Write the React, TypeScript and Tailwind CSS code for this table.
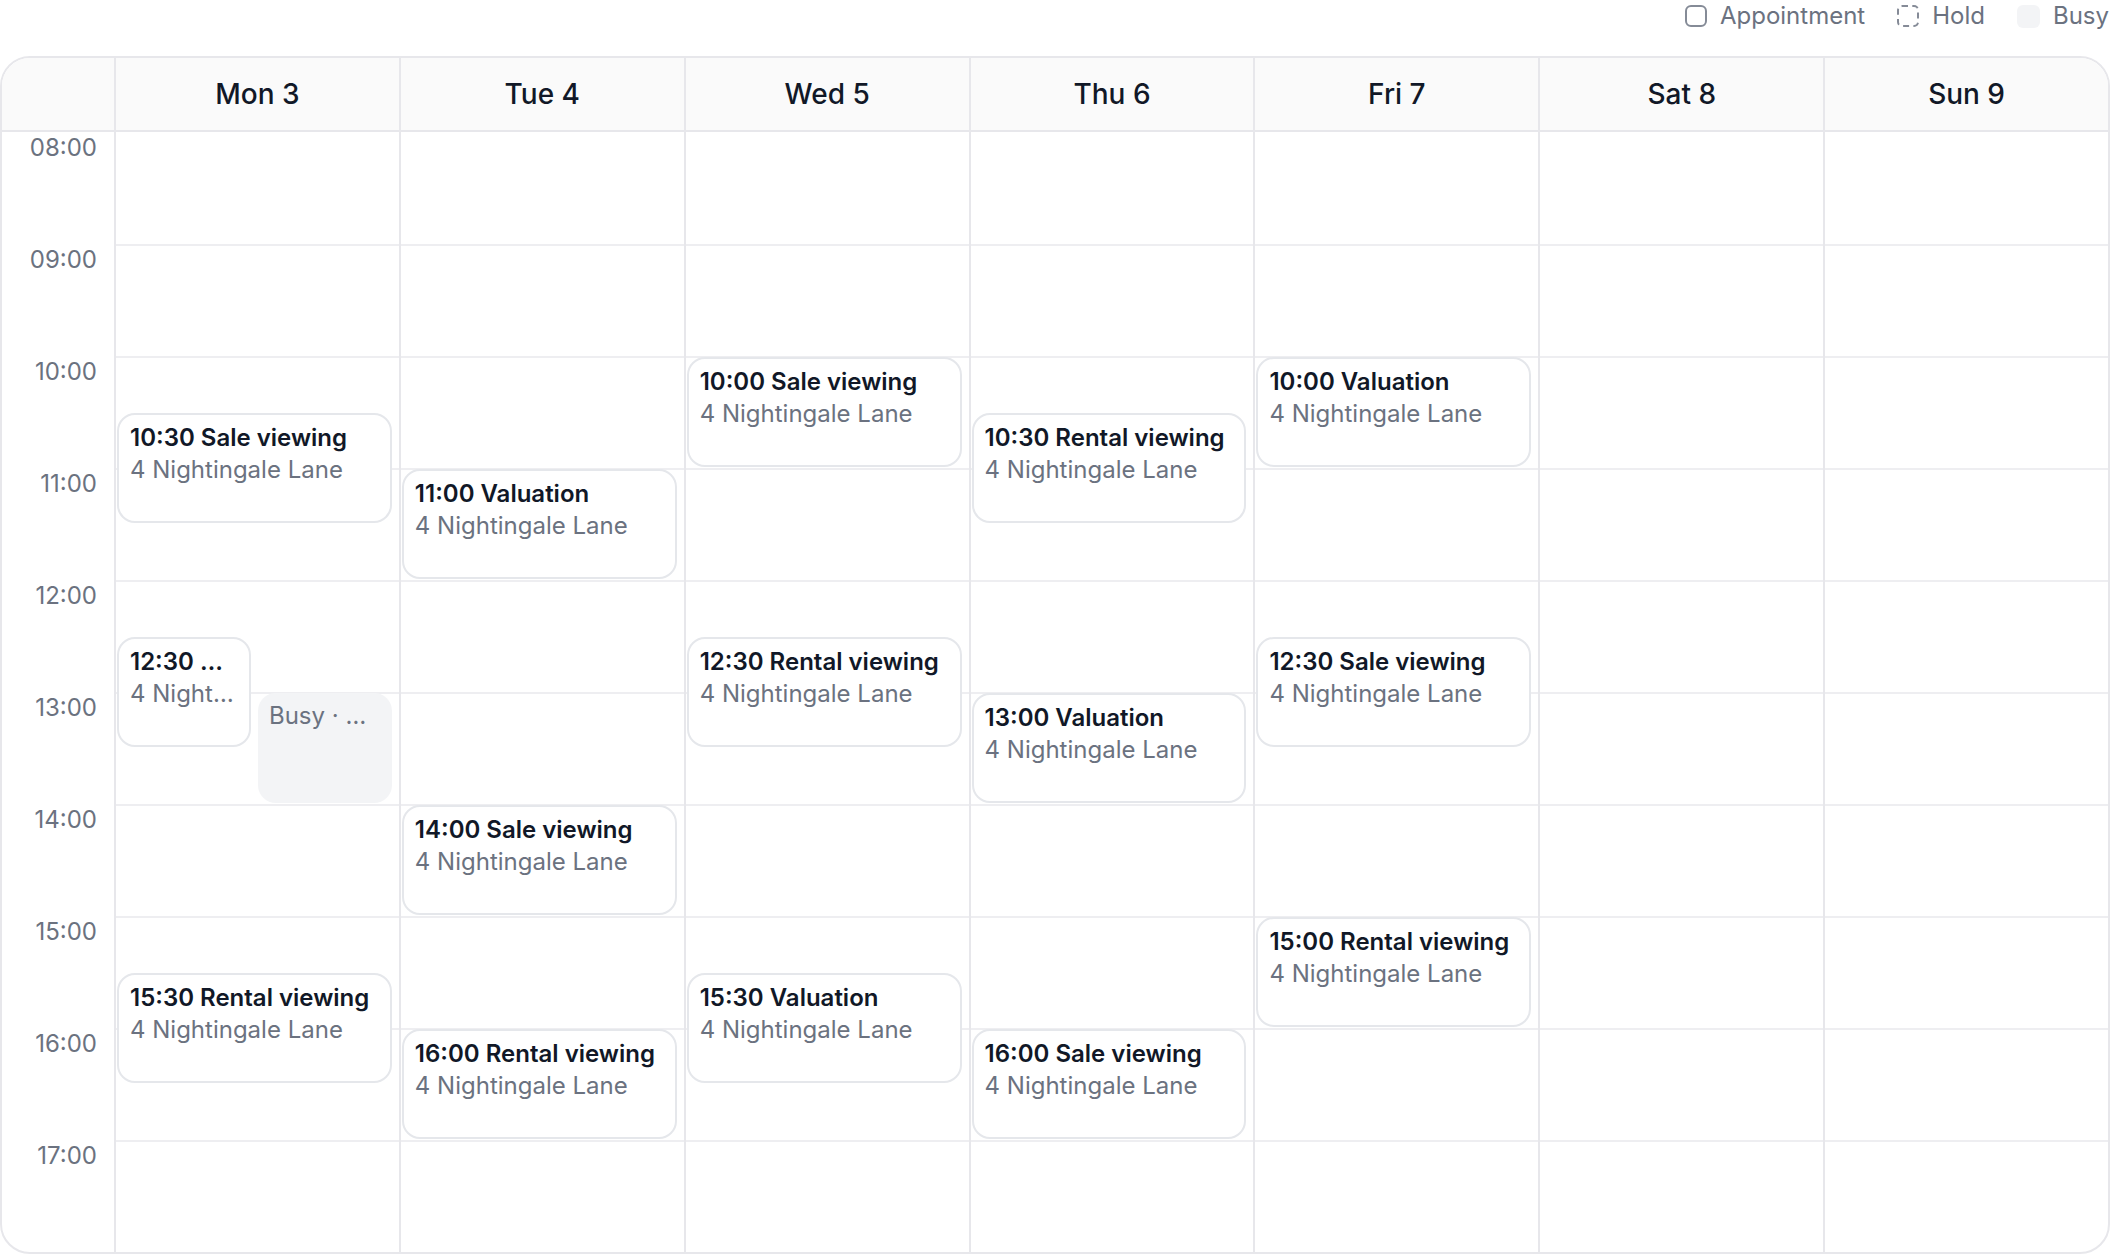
type CalEvent = {
  start: number;
  end: number;
  title: string;
  sub?: string;
  kind?: 'appt' | 'busy';
  lane?: number;
  lanes?: number;
};

type Day = { label: string; events: CalEvent[] };

const HOUR_H = 112;
const FIRST_HOUR = 8;
const hours = ['08:00', '09:00', '10:00', '11:00', '12:00', '13:00', '14:00', '15:00', '16:00', '17:00'];
const addr = '4 Nightingale Lane';

const days: Day[] = [
  {
    label: 'Mon 3',
    events: [
      { start: 10.5, end: 11.5, title: '10:30 Sale viewing', sub: addr },
      { start: 12.5, end: 13.5, title: '12:30 Valuation', sub: addr, lane: 0, lanes: 2 },
      { start: 13, end: 14, title: 'Busy · Meeting', kind: 'busy', lane: 1, lanes: 2 },
      { start: 15.5, end: 16.5, title: '15:30 Rental viewing', sub: addr },
    ],
  },
  {
    label: 'Tue 4',
    events: [
      { start: 11, end: 12, title: '11:00 Valuation', sub: addr },
      { start: 14, end: 15, title: '14:00 Sale viewing', sub: addr },
      { start: 16, end: 17, title: '16:00 Rental viewing', sub: addr },
    ],
  },
  {
    label: 'Wed 5',
    events: [
      { start: 10, end: 11, title: '10:00 Sale viewing', sub: addr },
      { start: 12.5, end: 13.5, title: '12:30 Rental viewing', sub: addr },
      { start: 15.5, end: 16.5, title: '15:30 Valuation', sub: addr },
    ],
  },
  {
    label: 'Thu 6',
    events: [
      { start: 10.5, end: 11.5, title: '10:30 Rental viewing', sub: addr },
      { start: 13, end: 14, title: '13:00 Valuation', sub: addr },
      { start: 16, end: 17, title: '16:00 Sale viewing', sub: addr },
    ],
  },
  {
    label: 'Fri 7',
    events: [
      { start: 10, end: 11, title: '10:00 Valuation', sub: addr },
      { start: 12.5, end: 13.5, title: '12:30 Sale viewing', sub: addr },
      { start: 15, end: 16, title: '15:00 Rental viewing', sub: addr },
    ],
  },
  { label: 'Sat 8', events: [] },
  { label: 'Sun 9', events: [] },
];

const EventCard = ({ ev }: { ev: CalEvent }) => {
  const lanes = ev.lanes ?? 1;
  const lane = ev.lane ?? 0;
  const style = {
    top: (ev.start - FIRST_HOUR) * HOUR_H + 1,
    height: (ev.end - ev.start) * HOUR_H - 2,
    left: lanes === 1 || lane === 0 ? '0px' : 'calc(50% + 3.5px)',
    width: lanes === 1 ? '100%' : 'calc(50% - 3.5px)',
  };

  if (ev.kind === 'busy') {
    return (
      <div className="absolute overflow-hidden rounded-[18px] bg-[#f3f4f6] px-[11px] pt-[7px]" style={style}>
        <div className="truncate text-[24px] leading-[32px] text-[#6b7280]">{ev.title}</div>
      </div>
    );
  }

  return (
    <div
      className="absolute overflow-hidden rounded-[18px] border-2 border-[#e5e7eb] bg-white px-[11px] pt-[7px]"
      style={style}
    >
      <div className="truncate text-[24px] font-semibold leading-[32px] text-[#111827]">{ev.title}</div>
      <div className="truncate text-[24px] leading-[32px] text-[#6b7280]">{ev.sub}</div>
    </div>
  );
};

const Legend = () => (
  <div className="flex h-[32px] items-center justify-end gap-[32px] pr-[1px] text-[24px] text-[#6b7280]">
    <div className="flex items-center gap-[13px]">
      <span className="h-[22px] w-[22px] rounded-[6px] border-2 border-[#858b97]" />
      <span>Appointment</span>
    </div>
    <div className="flex items-center gap-[13px]">
      <span className="h-[22px] w-[22px] rounded-[5px] border-2 border-dashed border-[#858b97]" />
      <span>Hold</span>
    </div>
    <div className="flex items-center gap-[13px]">
      <span className="h-[23px] w-[23px] rounded-[6px] bg-[#f3f4f6]" />
      <span>Busy</span>
    </div>
  </div>
);

export default function App() {
  return (
    <div className="min-h-screen bg-white font-['Inter',sans-serif]">
      <Legend />

      <div className="mt-[24px] overflow-hidden rounded-[30px] border-2 border-[#e7e7eb] bg-white">
        {/* Day headers */}
        <div className="grid h-[74px] grid-cols-[112px_repeat(7,minmax(0,1fr))] border-b-2 border-[#e7e7eb] bg-[#fafafa]">
          <div />
          {days.map((d) => (
            <div
              key={d.label}
              className="flex items-center justify-center border-l-2 border-[#e7e7eb] text-[28px] font-medium text-[#111827]"
            >
              {d.label}
            </div>
          ))}
        </div>

        {/* Body */}
        <div className="grid grid-cols-[112px_repeat(7,minmax(0,1fr))]">
          <div>
            {hours.map((h) => (
              <div key={h} className="h-[112px] pr-[17px] text-right text-[24px] leading-[32px] text-[#6b7280]">
                {h}
              </div>
            ))}
          </div>

          {days.map((d) => (
            <div key={d.label} className="relative border-l-2 border-[#e7e7eb]">
              {hours.map((h, i) => (
                <div key={h} className={i === 0 ? 'h-[112px]' : 'h-[112px] border-t-2 border-[#eeeef1]'} />
              ))}
              <div className="absolute inset-y-0 left-[1px] right-[7px]">
                {d.events.map((ev) => (
                  <EventCard key={ev.title + ev.start} ev={ev} />
                ))}
              </div>
            </div>
          ))}
        </div>
      </div>
    </div>
  );
}
